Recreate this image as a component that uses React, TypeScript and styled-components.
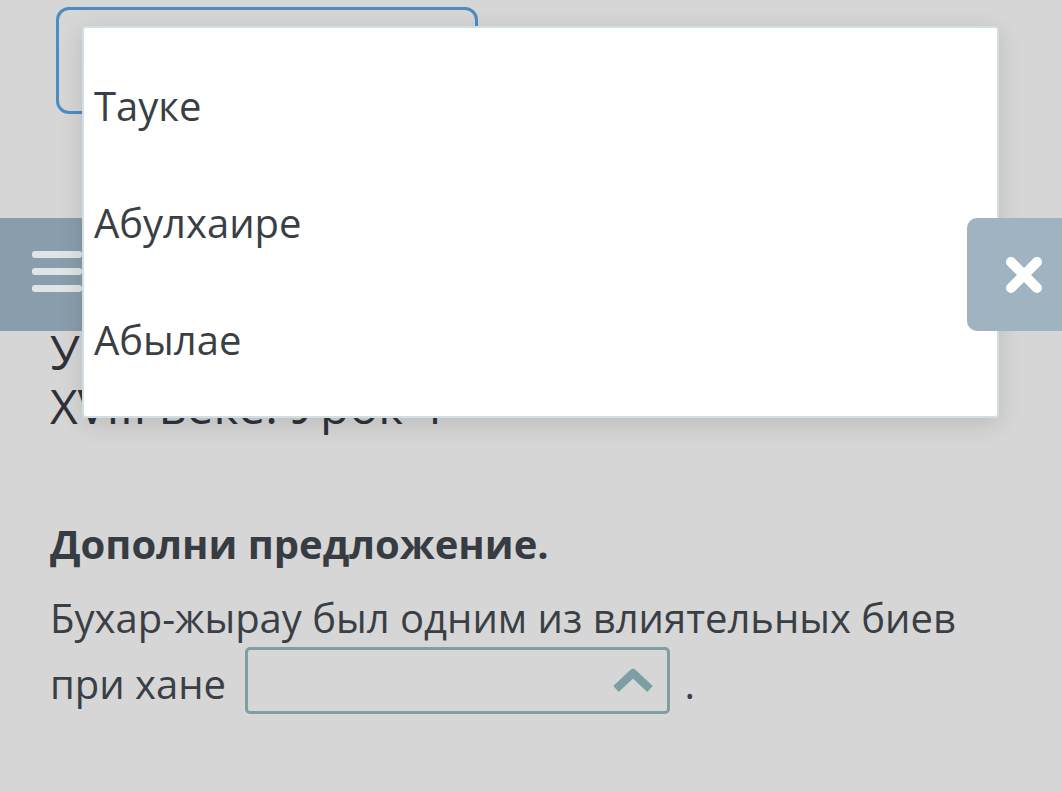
import React from 'react';
import styled, { createGlobalStyle } from 'styled-components';

const GlobalStyle = createGlobalStyle`
  html, body {
    margin: 0;
    padding: 0;
    background: #d6d6d6;
  }
  body {
    font-family: 'Open Sans', 'Noto Sans', sans-serif;
    color: #3a3f45;
  }
`;

const options = ['Тауке', 'Абулхаире', 'Абылае'];

export default function App() {
  return (
    <>
      <GlobalStyle />
      <Page>
        <TopField />

        <NavRow>
          <MenuButton>
            <Bar />
            <Bar />
            <Bar />
          </MenuButton>
          <CloseButton>
            <svg width="40" height="40" viewBox="0 0 40 40">
              <path
                d="M7 7 L33 33 M33 7 L7 33"
                stroke="#ffffff"
                strokeWidth="10"
                strokeLinecap="round"
              />
            </svg>
          </CloseButton>
        </NavRow>

        <Heading>
          Управление Казахским ханством в
          <br />
          XVIII веке. Урок 4
        </Heading>

        <Question>
          <QuestionTitle>Дополни предложение.</QuestionTitle>
          <Sentence>
            Бухар-жырау был одним из влиятельных биев
            <br />
            при хане <SelectBox>
              <svg width="44" height="30" viewBox="0 0 44 30">
                <path
                  d="M5 24 L22 8 L39 24"
                  fill="none"
                  stroke="#7d9ea3"
                  strokeWidth="8"
                  strokeLinejoin="round"
                />
              </svg>
            </SelectBox>
            <Dot>.</Dot>
          </Sentence>
        </Question>

        <Dropdown>
          {options.map((opt) => (
            <Option key={opt}>{opt}</Option>
          ))}
        </Dropdown>
      </Page>
    </>
  );
}

const Page = styled.div`
  position: relative;
  width: 1062px;
  height: 791px;
  overflow: hidden;
  padding-top: 7px;
  box-sizing: border-box;
`;

const TopField = styled.div`
  margin-left: 56px;
  width: 422px;
  height: 107px;
  border: 3px solid #4d8cc2;
  border-radius: 13px;
  box-sizing: border-box;
`;

const NavRow = styled.div`
  display: flex;
  justify-content: space-between;
  margin-top: 104px;
  height: 113px;
`;

const MenuButton = styled.div`
  width: 113px;
  background: #8a9dac;
  border-radius: 0 10px 10px 0;
  display: flex;
  flex-direction: column;
  justify-content: center;
  gap: 10px;
  padding-left: 32px;
  padding-bottom: 6px;
  box-sizing: border-box;
`;

const Bar = styled.div`
  width: 50px;
  height: 7px;
  border-radius: 3px;
  background: #dfe4e7;
`;

const CloseButton = styled.div`
  position: relative;
  z-index: 2;
  width: 95px;
  background: #9fb3c1;
  border-radius: 10px 0 0 10px;
  display: flex;
  align-items: center;
  justify-content: center;
  padding-left: 18px;
  box-sizing: border-box;
`;

const Heading = styled.h1`
  margin: -6px 0 0;
  padding: 0 50px;
  font-size: 48px;
  line-height: 54px;
  font-weight: 400;
  color: #2f3338;
`;

const Question = styled.div`
  padding: 0 50px;
  margin-top: 86px;
`;

const QuestionTitle = styled.div`
  font-size: 40px;
  font-weight: 700;
  line-height: 50px;
  color: #373c43;
`;

const Sentence = styled.div`
  margin-top: 16px;
  font-size: 40px;
  line-height: 66px;
  color: #3a3f45;
`;

const SelectBox = styled.span`
  display: inline-flex;
  align-items: center;
  justify-content: flex-end;
  vertical-align: middle;
  transform: translateY(-8px);
  width: 425px;
  height: 67px;
  margin-left: 9px;
  padding-right: 12px;
  border: 3px solid #7f9ea3;
  border-radius: 5px;
  box-sizing: border-box;
`;

const Dot = styled.span`
  margin-left: 14px;
`;

const Dropdown = styled.div`
  position: absolute;
  z-index: 1;
  left: 82px;
  top: 26px;
  width: 917px;
  height: 392px;
  background: #ffffff;
  border: 2px solid #cfdfe3;
  border-radius: 4px;
  box-shadow: 0 6px 24px rgba(0, 0, 0, 0.12);
  box-sizing: border-box;
  display: flex;
  flex-direction: column;
  justify-content: center;
`;

const Option = styled.div`
  padding: 0 10px;
  height: 117px;
  display: flex;
  align-items: center;
  font-size: 40px;
  color: #3a3f45;
`;
